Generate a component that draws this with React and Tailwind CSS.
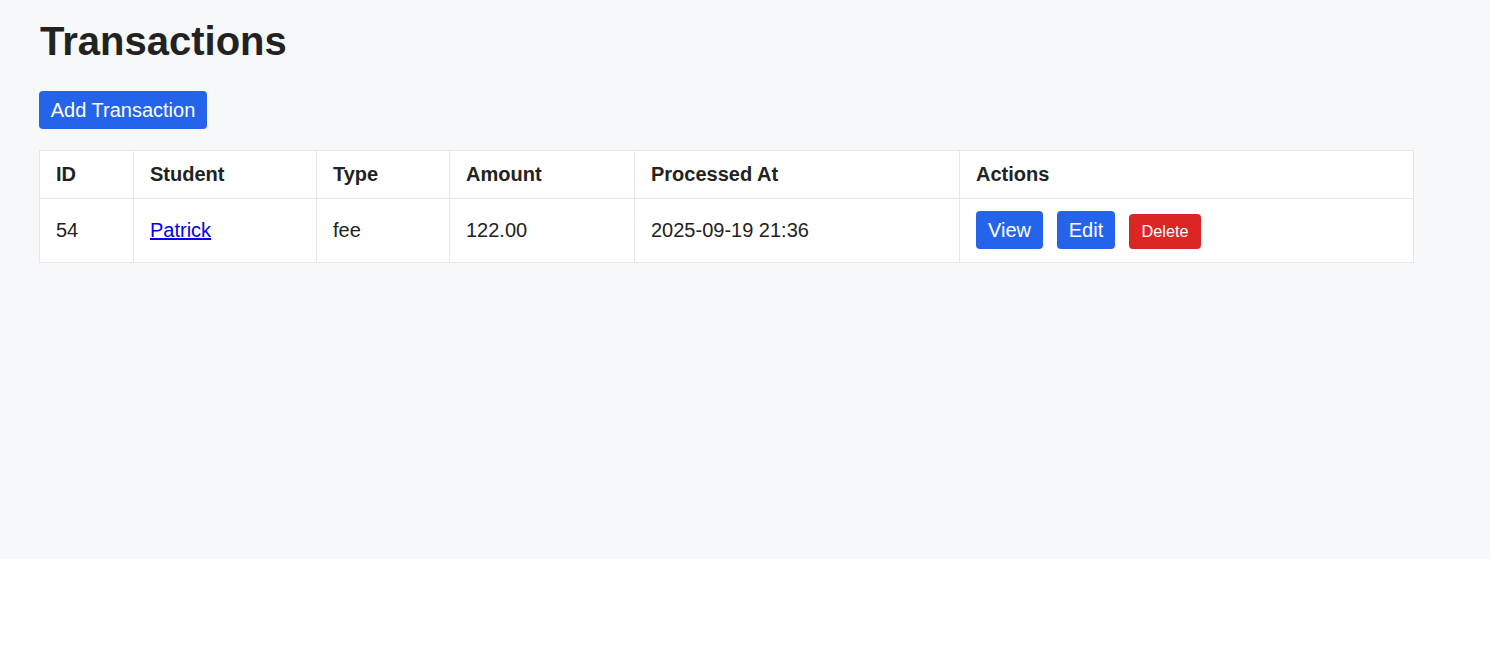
export default function App() {
  const cols = [
    { label: "ID", w: "w-[94px]" },
    { label: "Student", w: "w-[183px]" },
    { label: "Type", w: "w-[133px]" },
    { label: "Amount", w: "w-[185px]" },
    { label: "Processed At", w: "w-[325px]" },
    { label: "Actions", w: "w-[454px]" },
  ]

  return (
    <div className="h-[559px] bg-[#f7f8fa] px-[39px] pt-[18px] text-[#222] font-['Liberation_Sans',Arial,sans-serif]">
      <h1 className="text-[40px] leading-[46px] font-bold pl-[1px]">Transactions</h1>

      <button className="mt-[27px] h-[38px] w-[168px] rounded-[4px] bg-[#2563eb] text-white text-[20px] leading-[23px]">
        Add Transaction
      </button>

      <table className="mt-[21px] w-[1375px] table-fixed border-collapse bg-white">
        <thead>
          <tr>
            {cols.map(c => (
              <th
                key={c.label}
                className={`${c.w} border border-[#e5e7eb] px-[16px] h-[48px] text-left text-[20px] leading-[23px] font-bold`}
              >
                {c.label}
              </th>
            ))}
          </tr>
        </thead>
        <tbody>
          <tr className="text-[20px] leading-[23px]">
            <td className="border border-[#e5e7eb] px-[16px] h-[64px]">54</td>
            <td className="border border-[#e5e7eb] px-[16px]">
              <a href="#" className="text-[#0000ee] underline">Patrick</a>
            </td>
            <td className="border border-[#e5e7eb] px-[16px]">fee</td>
            <td className="border border-[#e5e7eb] px-[16px]">122.00</td>
            <td className="border border-[#e5e7eb] px-[16px]">2025-09-19 21:36</td>
            <td className="border border-[#e5e7eb] px-[16px]">
              <div className="flex items-end gap-[14px] -mt-[1px]">
                <button className="h-[38px] w-[67px] rounded-[4px] bg-[#2563eb] text-white text-[20px]">View</button>
                <button className="h-[38px] w-[58px] rounded-[4px] bg-[#2563eb] text-white text-[20px]">Edit</button>
                <button className="h-[35px] w-[72px] rounded-[4px] bg-[#dc2626] text-white text-[16.25px]">Delete</button>
              </div>
            </td>
          </tr>
        </tbody>
      </table>
    </div>
  )
}
